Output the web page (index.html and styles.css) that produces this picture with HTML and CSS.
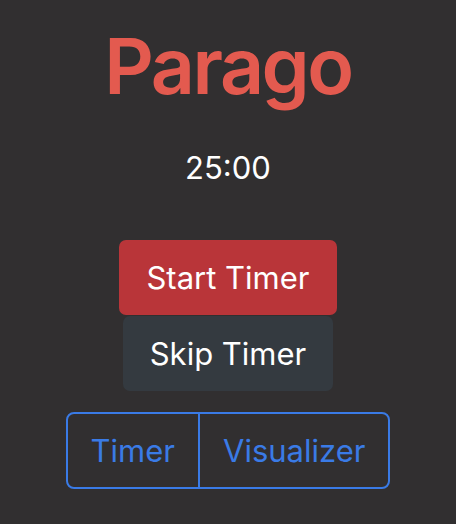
FILE: index.html
```html
<!DOCTYPE html>
<html lang="en">
<head>
    <meta charset="UTF-8">
    <meta name="viewport" content="width=device-width, initial-scale=1.0">
    <title>Parago</title>
    <link rel="stylesheet" href="styles.css">
</head>
<body>
    <div class="app">
        <h1 class="title">Parago</h1>
        <p class="clock">25:00</p>

        <div class="controls">
            <button class="btn btn-start">Start Timer</button>
            <button class="btn btn-skip">Skip Timer</button>
        </div>

        <div class="tabs">
            <button class="tab">Timer</button>
            <button class="tab">Visualizer</button>
        </div>
    </div>
</body>
</html>
```

FILE: styles.css
```css
body {
    margin: 0;
    padding: 0;
    background-color: #312f30;
    font-family: Inter, "Noto Sans", sans-serif;
    color: #fff;
}

.app {
    display: flex;
    flex-direction: column;
    align-items: center;
    padding-top: 20px;
}

.title {
    margin: 0;
    font-size: 77px;
    font-weight: 600;
    line-height: 1.2;
    color: #e35a4f;
    letter-spacing: -2.5px;
}

.clock {
    margin: 33px 0 0;
    font-size: 31px;
    line-height: 1.5;
}

.controls {
    display: flex;
    flex-direction: column;
    align-items: center;
    margin-top: 48px;
}

.btn {
    font-family: inherit;
    font-size: 31px;
    line-height: 45px;
    padding: 15px 27px;
    border: none;
    border-radius: 7px;
    color: #fff;
    cursor: pointer;
}

.btn-start {
    background-color: #b93539;
}

.btn-skip {
    margin-top: 1px;
    background-color: #343a40;
}

.tabs {
    display: flex;
    margin-top: 21px;
    border: 2px solid #3a7be6;
    border-radius: 8px;
    overflow: hidden;
}

.tab {
    font-family: inherit;
    font-size: 31px;
    line-height: 45px;
    padding: 14px 23px;
    background: transparent;
    border: none;
    color: #3a7be6;
    cursor: pointer;
}

.tab + .tab {
    border-left: 2px solid #3a7be6;
}
```
